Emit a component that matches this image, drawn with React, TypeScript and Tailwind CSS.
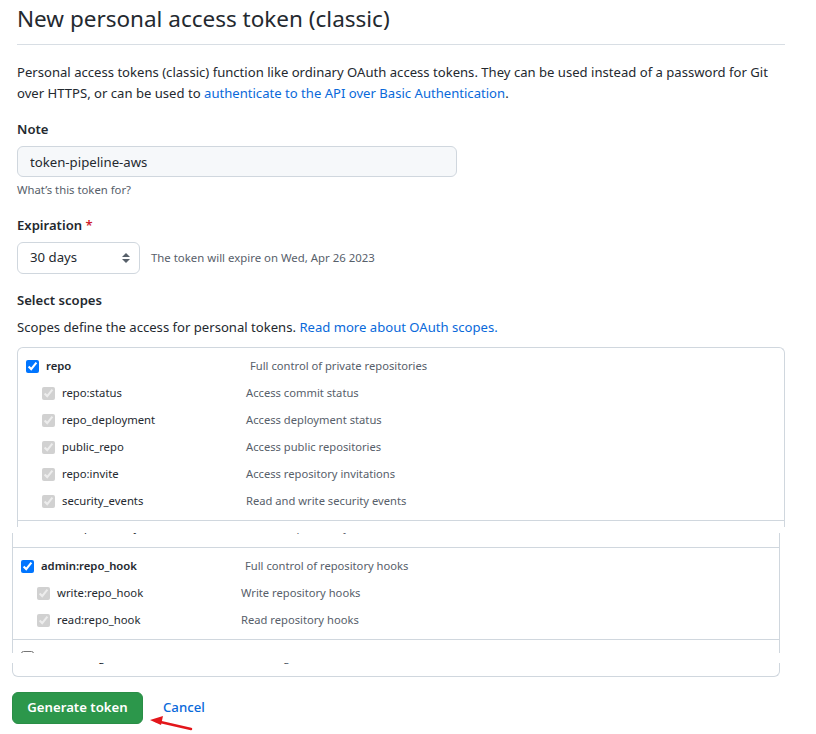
import React from 'react';

interface Scope {
  name: string;
  description: string;
  sub?: boolean;
  checked?: boolean;
  hideBox?: boolean;
}

const REPO_SCOPES: Scope[] = [
  { name: 'repo', description: 'Full control of private repositories', checked: true },
  { name: 'repo:status', description: 'Access commit status', sub: true, checked: true },
  { name: 'repo_deployment', description: 'Access deployment status', sub: true, checked: true },
  { name: 'public_repo', description: 'Access public repositories', sub: true, checked: true },
  { name: 'repo:invite', description: 'Access repository invitations', sub: true, checked: true },
  { name: 'security_events', description: 'Read and write security events', sub: true, checked: true },
];

const HOOK_SCOPES: Scope[] = [
  { name: 'admin:repo_hook', description: 'Full control of repository hooks', checked: true },
  { name: 'write:repo_hook', description: 'Write repository hooks', sub: true, checked: true },
  { name: 'read:repo_hook', description: 'Read repository hooks', sub: true, checked: true },
];

function ScopeRow({ name, description, sub, checked, hideBox }: Scope) {
  return (
    <div className={sub ? 'flex items-center h-[27px] pl-[24px]' : 'flex items-center h-[27px] pl-[8px]'}>
      <input
        type="checkbox"
        checked={!!checked}
        disabled={!!sub}
        readOnly
        className={hideBox ? 'invisible m-0 w-[13px] h-[13px] shrink-0' : 'm-0 w-[13px] h-[13px] shrink-0'}
      />
      <span
        className={
          sub
            ? 'ml-[7px] w-[184px] shrink-0 text-[11.3px] text-[#24292f]'
            : 'ml-[7px] w-[204px] shrink-0 text-[11.3px] font-semibold text-[#24292f]'
        }
      >
        {name}
      </span>
      <span className="text-[11.2px] text-[#57606a] whitespace-nowrap">{description}</span>
    </div>
  );
}

export default function App() {
  return (
    <div className="relative min-h-screen bg-white text-[#24292f] font-['Noto_Sans',sans-serif]">
      <div className="pl-[17px] w-[785px]">
        <h1 className="text-[22.5px] leading-[36px] font-normal pt-[1px] pb-[7px] border-b border-[#d8dee4]">
          New personal access token (classic)
        </h1>
        <p className="mt-[17px] text-[13.1px] leading-[21px]">
          Personal access tokens (classic) function like ordinary OAuth access tokens. They can be used instead of a password for Git
          <br />
          over HTTPS, or can be used to{' '}
          <a className="text-[#0969da]">authenticate to the API over Basic Authentication</a>.
        </p>

        <label className="block mt-[15px] text-[13.1px] leading-[21px] font-semibold">Note</label>
        <input
          type="text"
          defaultValue="token-pipeline-aws"
          readOnly
          className="block mt-[6px] w-[440px] h-[31px] px-[12px] text-[13.2px] bg-[#f6f8fa] border border-[#d0d7de] rounded-md outline-none"
        />
        <p className="mt-[4px] text-[11.3px] leading-[18px] text-[#57606a]">What’s this token for?</p>

        <label className="block mt-[16px] text-[13.1px] leading-[21px] font-semibold">
          Expiration <span className="text-[#cf222e]">*</span>
        </label>
        <div className="mt-[6px] flex items-center">
          <div className="flex items-center justify-between w-[123px] h-[32px] pl-[12px] pr-[8px] border border-[#d0d7de] rounded-md text-[13.2px]">
            <span>30 days</span>
            <svg width="10" height="14" viewBox="0 0 10 14" className="text-[#57606a]">
              <path d="M5 2 L9 6 L1 6 Z" fill="currentColor" />
              <path d="M5 12 L9 8 L1 8 Z" fill="currentColor" />
            </svg>
          </div>
          <span className="ml-[11px] text-[11.4px] text-[#57606a]">The token will expire on Wed, Apr 26 2023</span>
        </div>

        <h3 className="mt-[16px] text-[13.1px] leading-[21px] font-semibold">Select scopes</h3>
        <p className="mt-[6px] text-[13.1px] leading-[21px]">
          Scopes define the access for personal tokens.{' '}
          <a className="text-[#0969da]">Read more about OAuth scopes.</a>
        </p>

        <div className="mt-[9px] border border-b-0 border-[#d0d7de] rounded-t-md">
          <div className="py-[5px]">
            {REPO_SCOPES.map((s) => (
              <ScopeRow key={s.name} {...s} />
            ))}
          </div>
          <div className="h-[7px] border-t border-[#d0d7de]" />
        </div>
      </div>

      <div className="h-[6px]" />

      <div className="pl-[12px] w-[780px]">
        <div className="h-[14px] overflow-hidden border-x border-[#d0d7de]">
          <div className="-mt-[19px]">
            <ScopeRow name="read:public_key" description="Read user public keys" sub checked hideBox />
          </div>
        </div>
        <div className="py-[5px] border-x border-t border-[#d0d7de]">
          {HOOK_SCOPES.map((s) => (
            <ScopeRow key={s.name} {...s} />
          ))}
        </div>
        <div className="h-[14px] overflow-hidden border-x border-t border-[#d0d7de]">
          <div className="pt-[4px]">
            <ScopeRow name="admin:org_hook" description="Full control of organization hooks" />
          </div>
        </div>
        <div className="h-[10px]" />
        <div className="h-[14px] overflow-hidden border-x border-b border-[#d0d7de] rounded-b-md">
          <div className="-mt-[19px]">
            <ScopeRow name="write:org_hook" description="Write organization hooks" sub hideBox />
          </div>
        </div>

        <div className="mt-[15px] flex items-center">
          <button
            type="button"
            className="w-[131px] h-[32px] rounded-md bg-[#2c974b] border border-[#298e46] text-white text-[13.2px] font-semibold"
          >
            Generate token
          </button>
          <a className="ml-[20px] text-[13.2px] font-medium text-[#0969da]">Cancel</a>
        </div>
      </div>

      {/* annotation arrow */}
      <svg className="absolute left-[146px] top-[712px]" width="50" height="22" viewBox="0 0 50 22">
        <path d="M45 17 L10 9" stroke="#e3161b" strokeWidth="2.5" strokeLinecap="round" />
        <path d="M4 8 L17 4 L15 13 Z" fill="#e3161b" />
      </svg>
    </div>
  );
}
